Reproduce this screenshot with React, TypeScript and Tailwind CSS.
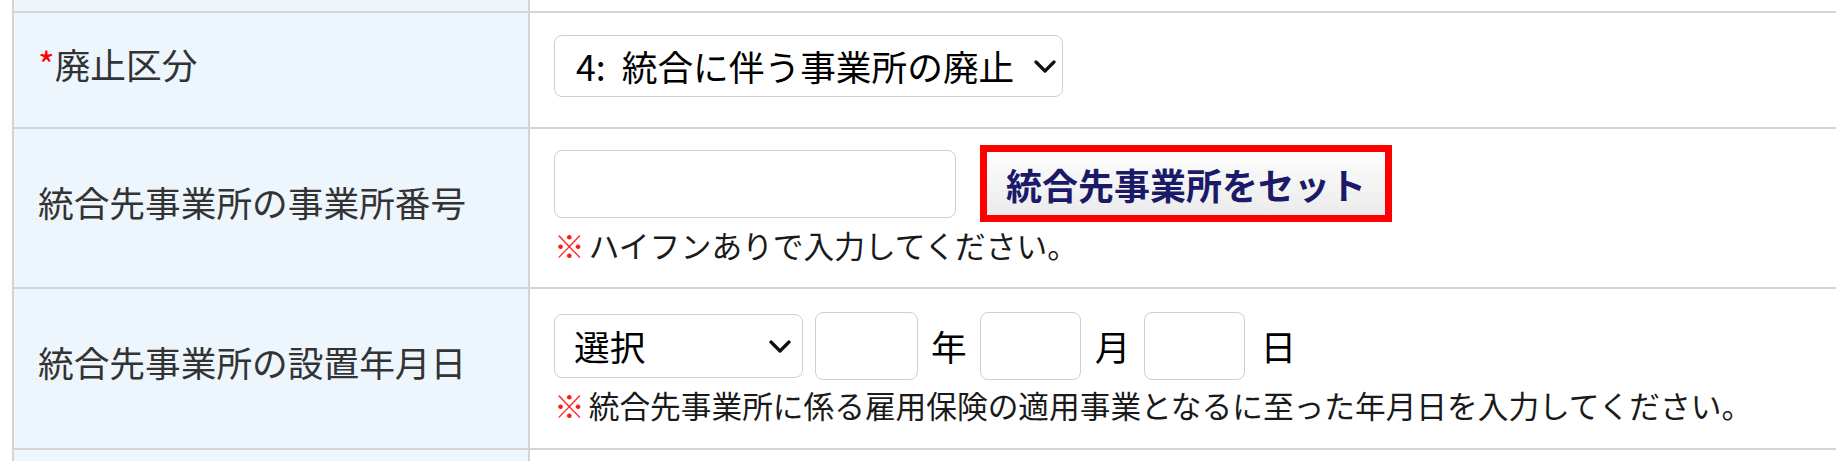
import React from "react";

const FONT = { fontFamily: '"Noto Sans CJK JP", "Noto Sans", sans-serif' };

function Chevron() {
  return (
    <svg width="22" height="13" viewBox="0 0 22 13" className="shrink-0">
      <polyline points="2,2 11,11 20,2" fill="none" stroke="#111" strokeWidth="3.2" strokeLinecap="round" strokeLinejoin="round" />
    </svg>
  );
}

function Hint({ text }: { text: string }) {
  return (
    <div className="flex items-center text-[30.7px] leading-[36px] text-[#1a1a1a] whitespace-nowrap">
      <span className="text-[#ff1a1a] font-bold mr-[4px]">※</span>
      <span>{text}</span>
    </div>
  );
}

function Label({ children }: { children: React.ReactNode }) {
  return (
    <div className="w-[516px] shrink-0 bg-[#edf5fd] border-r-2 border-[#d4d4d4] flex items-center pl-[24px] pb-[13px] text-[35.7px] leading-[44px] text-[#333333] whitespace-nowrap">
      {children}
    </div>
  );
}

export default function App() {
  return (
    <div className="w-[1836px] h-[461px] overflow-hidden bg-white pl-[12px]" style={FONT}>
      <div className="border-l-2 border-[#d4d4d4] w-[1900px]">
        {/* partial top row */}
        <div className="flex h-[13px] border-b-2 border-[#d4d4d4]">
          <div className="w-[516px] shrink-0 bg-[#edf5fd] border-r-2 border-[#d4d4d4]" />
          <div className="flex-1" />
        </div>

        {/* 廃止区分 */}
        <div className="flex h-[116px] border-b-2 border-[#d4d4d4]">
          <Label>
            <span className="text-[#ff0000]">*</span>廃止区分
          </Label>
          <div className="flex-1 pl-[24px] pt-[22px]">
            <div className="inline-flex items-center h-[62px] border-[1.5px] border-[#cfcfcf] rounded-[8px] bg-white pl-[21px] pr-[6px] gap-[20px] text-[35.7px] leading-[44px] text-black whitespace-nowrap">
              <span>
                4:<span className="ml-[16px]">統合に伴う事業所の廃止</span>
              </span>
              <Chevron />
            </div>
          </div>
        </div>

        {/* 統合先事業所の事業所番号 */}
        <div className="flex h-[160px] border-b-2 border-[#d4d4d4]">
          <Label>統合先事業所の事業所番号</Label>
          <div className="flex-1 pl-[24px] pt-[16px] flex flex-col">
            <div className="flex items-center h-[77px]">
              <div className="w-[402px] h-[68px] border-[1.5px] border-[#d0d0d0] rounded-[8px] bg-white" />
              <div className="ml-[24px] border-[7px] border-[#ff0000] h-[77px] flex">
                <div className="flex items-center px-[19px] bg-gradient-to-b from-[#fdfdfd] to-[#ebebeb] text-[36px] leading-[44px] font-bold text-[#1b1a68] whitespace-nowrap">
                  統合先事業所をセット
                </div>
              </div>
            </div>
            <div className="mt-[5px]">
              <Hint text="ハイフンありで入力してください。" />
            </div>
          </div>
        </div>

        {/* 統合先事業所の設置年月日 */}
        <div className="flex h-[161px] border-b-2 border-[#d4d4d4]">
          <Label>統合先事業所の設置年月日</Label>
          <div className="flex-1 pl-[24px] pt-[23px] flex flex-col">
            <div className="flex items-center h-[68px] text-[35.7px] leading-[44px] text-black whitespace-nowrap">
              <div className="w-[249px] h-[64px] flex items-center justify-between border-[1.5px] border-[#cfcfcf] rounded-[8px] bg-white pl-[19px] pr-[11px]">
                <span>選択</span>
                <Chevron />
              </div>
              <div className="ml-[12px] w-[103px] h-[68px] border-[1.5px] border-[#d0d0d0] rounded-[8px] bg-white" />
              <span className="mx-[13px]">年</span>
              <div className="w-[101px] h-[68px] border-[1.5px] border-[#d0d0d0] rounded-[8px] bg-white" />
              <span className="mx-[14px]">月</span>
              <div className="w-[101px] h-[68px] border-[1.5px] border-[#d0d0d0] rounded-[8px] bg-white" />
              <span className="ml-[15px]">日</span>
            </div>
            <div className="mt-[7px]">
              <Hint text="統合先事業所に係る雇用保険の適用事業となるに至った年月日を入力してください。" />
            </div>
          </div>
        </div>

        {/* partial bottom row */}
        <div className="flex h-[40px]">
          <div className="w-[516px] shrink-0 bg-[#edf5fd] border-r-2 border-[#d4d4d4]" />
          <div className="flex-1" />
        </div>
      </div>
    </div>
  );
}
